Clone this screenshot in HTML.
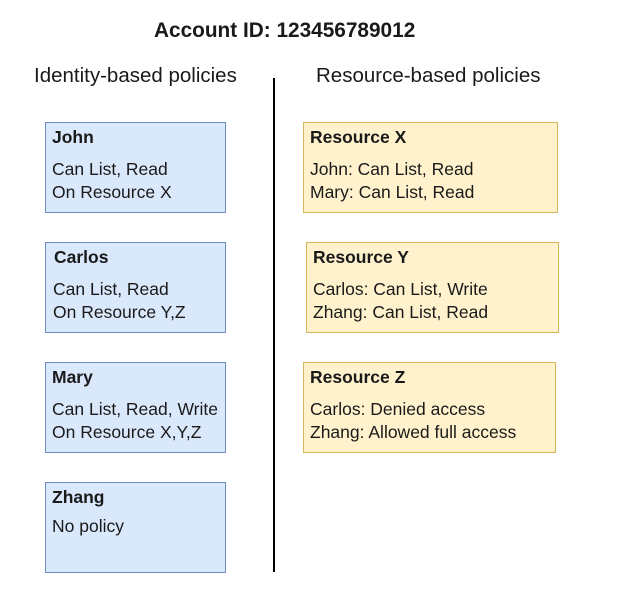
<!DOCTYPE html>
<html><head><style>
body{margin:0;width:627px;height:594px;background:#fff;position:relative;font-family:"Liberation Sans",Arial,sans-serif;color:#1a1a1a;overflow:hidden}
.a{position:absolute;white-space:nowrap}
.b{position:absolute;box-sizing:border-box;border:1px solid #6c8ebf;background:#dae8fc;font-size:17.5px;line-height:23px}
.y{border-color:#d6b656;background:#fff2cc}
.b b{position:absolute;top:3px;left:6px}
.b span{position:absolute;top:35px;left:6px;white-space:nowrap}
</style></head><body>
<div class="a" style="left:154px;top:19px;font-size:20.8px;font-weight:bold">Account ID: 123456789012</div>
<div class="a" style="left:34px;top:64px;font-size:20.5px">Identity-based policies</div>
<div class="a" style="left:316px;top:64px;font-size:20.5px">Resource-based policies</div>
<div style="position:absolute;left:273px;top:78px;width:2px;height:494px;background:#000"></div>

<div class="b" style="left:45px;top:122px;width:181px;height:91px"><b>John</b><span>Can List, Read<br>On Resource X</span></div>
<div class="b" style="left:45px;top:242px;width:181px;height:91px"><b style="left:8px">Carlos</b><span style="left:7px">Can List, Read<br>On Resource Y,Z</span></div>
<div class="b" style="left:45px;top:362px;width:181px;height:91px"><b>Mary</b><span>Can List, Read, Write<br>On Resource X,Y,Z</span></div>
<div class="b" style="left:45px;top:482px;width:181px;height:91px"><b>Zhang</b><span style="top:32px">No policy</span></div>

<div class="b y" style="left:303px;top:122px;width:255px;height:91px"><b>Resource X</b><span>John: Can List, Read<br>Mary: Can List, Read</span></div>
<div class="b y" style="left:306px;top:242px;width:253px;height:91px"><b>Resource Y</b><span>Carlos: Can List, Write<br>Zhang: Can List, Read</span></div>
<div class="b y" style="left:303px;top:362px;width:253px;height:91px"><b>Resource Z</b><span>Carlos: Denied access<br>Zhang: Allowed full access</span></div>
</body></html>
